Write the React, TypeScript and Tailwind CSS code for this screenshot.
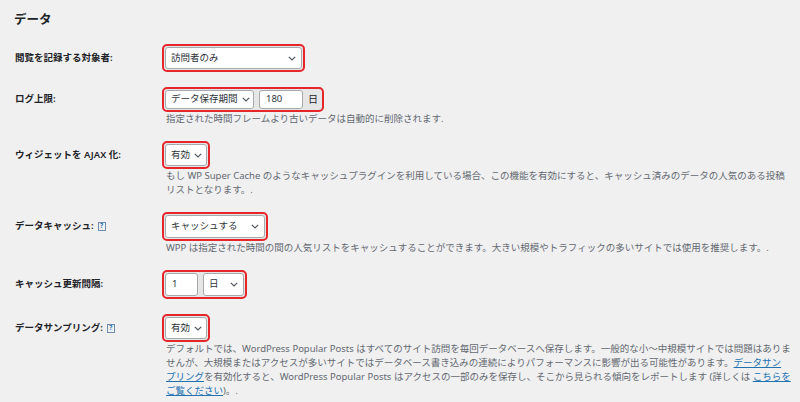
const font = "font-['Noto_Sans','Noto_Sans_CJK_JP',sans-serif]";

function Chevron() {
  return (
    <svg width="8" height="5" viewBox="0 0 8 5" className="shrink-0">
      <polyline points="0.8,0.8 4,4 7.2,0.8" fill="none" stroke="#50575e" strokeWidth="1.2" />
    </svg>
  );
}

function Select({ text, w, h }: { text: string; w: string; h: string }) {
  return (
    <div className={`${w} ${h} flex items-center justify-between gap-[4px] pl-[5px] pr-[5px] bg-white border border-[#a7aaad] rounded-[3px] text-[9.5px] text-[#2c3338]`}>
      <span className="whitespace-nowrap">{text}</span>
      <Chevron />
    </div>
  );
}

function Input({ value, w, h }: { value: string; w: string; h: string }) {
  return (
    <div className={`${w} ${h} flex items-center pl-[6px] bg-white border border-[#a7aaad] rounded-[3px] text-[9.5px] text-[#2c3338]`}>
      {value}
    </div>
  );
}

function Help() {
  return (
    <span className="inline-flex items-center justify-center w-[8px] h-[9px] ml-[4px] border border-[#6d8db5] text-[6.5px] leading-none text-[#2271b1] font-bold align-middle">?</span>
  );
}

function Box({ children }: { children: React.ReactNode }) {
  return (
    <div className="inline-flex items-center gap-[5px] p-[1px] border-2 border-[#e5262b] rounded-[5px] bg-[#e6e6e7] self-start">
      {children}
    </div>
  );
}

function Row({ label, help, h, children }: { label: string; help?: boolean; h: string; children: React.ReactNode }) {
  return (
    <div className="flex">
      <div className={`w-[147px] ${h} flex items-center text-[9.5px] font-semibold text-[#1d2327] whitespace-nowrap`}>
        {label}
        {help && <Help />}
      </div>
      <div className="flex flex-col">{children}</div>
    </div>
  );
}

function Desc({ children }: { children: React.ReactNode }) {
  return <div className="ml-[4px] text-[9.5px] leading-[14px] text-[#646970] whitespace-nowrap">{children}</div>;
}

export default function App() {
  return (
    <div className={`w-[800px] h-[402px] overflow-hidden bg-[#f0f0f1] pt-[12px] pl-[15px] ${font}`}>
      <h2 className="text-[12.5px] leading-[16px] font-bold text-[#1d2327] -ml-[1px]">データ</h2>
      <div className="mt-[16px] flex flex-col gap-[15px]">
        <Row label="閲覧を記録する対象者:" h="h-[28px]">
          <Box>
            <Select text="訪問者のみ" w="w-[137px]" h="h-[22px]" />
          </Box>
        </Row>
        <Row label="ログ上限:" h="h-[25px]">
          <Box>
            <Select text="データ保存期間" w="w-[89px]" h="h-[19px]" />
            <Input value="180" w="w-[44px]" h="h-[19px]" />
            <span className="text-[10px] text-[#1d2327] pr-[3px]">日</span>
          </Box>
          <Desc>指定された時間フレームより古いデータは自動的に削除されます.</Desc>
        </Row>
        <Row label="ウィジェットを AJAX 化:" h="h-[28px]">
          <Box>
            <Select text="有効" w="w-[42px]" h="h-[22px]" />
          </Box>
          <Desc>
            <div>もし WP Super Cache のようなキャッシュプラグインを利用している場合、この機能を有効にすると、キャッシュ済みのデータの人気のある投稿</div>
            <div>リストとなります。.</div>
          </Desc>
        </Row>
        <Row label="データキャッシュ:" help h="h-[29px]">
          <Box>
            <Select text="キャッシュする" w="w-[100px]" h="h-[23px]" />
          </Box>
          <Desc>WPP は指定された時間の間の人気リストをキャッシュすることができます。大きい規模やトラフィックの多いサイトでは使用を推奨します。.</Desc>
        </Row>
        <Row label="キャッシュ更新間隔:" h="h-[29px]">
          <Box>
            <Input value="1" w="w-[33px]" h="h-[23px]" />
            <Select text="日" w="w-[41px]" h="h-[23px]" />
          </Box>
        </Row>
        <Row label="データサンプリング:" help h="h-[28px]">
          <Box>
            <Select text="有効" w="w-[42px]" h="h-[22px]" />
          </Box>
          <Desc>
            <div>デフォルトでは、WordPress Popular Posts はすべてのサイト訪問を毎回データベースへ保存します。一般的な小～中規模サイトでは問題はありま</div>
            <div>
              せんが、大規模またはアクセスが多いサイトではデータベース書き込みの連続によりパフォーマンスに影響が出る可能性があります。
              <a className="text-[#2271b1] underline">データサン</a>
            </div>
            <div>
              <a className="text-[#2271b1] underline">プリング</a>を有効化すると、WordPress Popular Posts はアクセスの一部のみを保存し、そこから見られる傾向をレポートします (詳しくは{" "}
              <a className="text-[#2271b1] underline">こちらを</a>
            </div>
            <div>
              <a className="text-[#2271b1] underline">ご覧ください</a>)。.
            </div>
          </Desc>
        </Row>
      </div>
    </div>
  );
}
